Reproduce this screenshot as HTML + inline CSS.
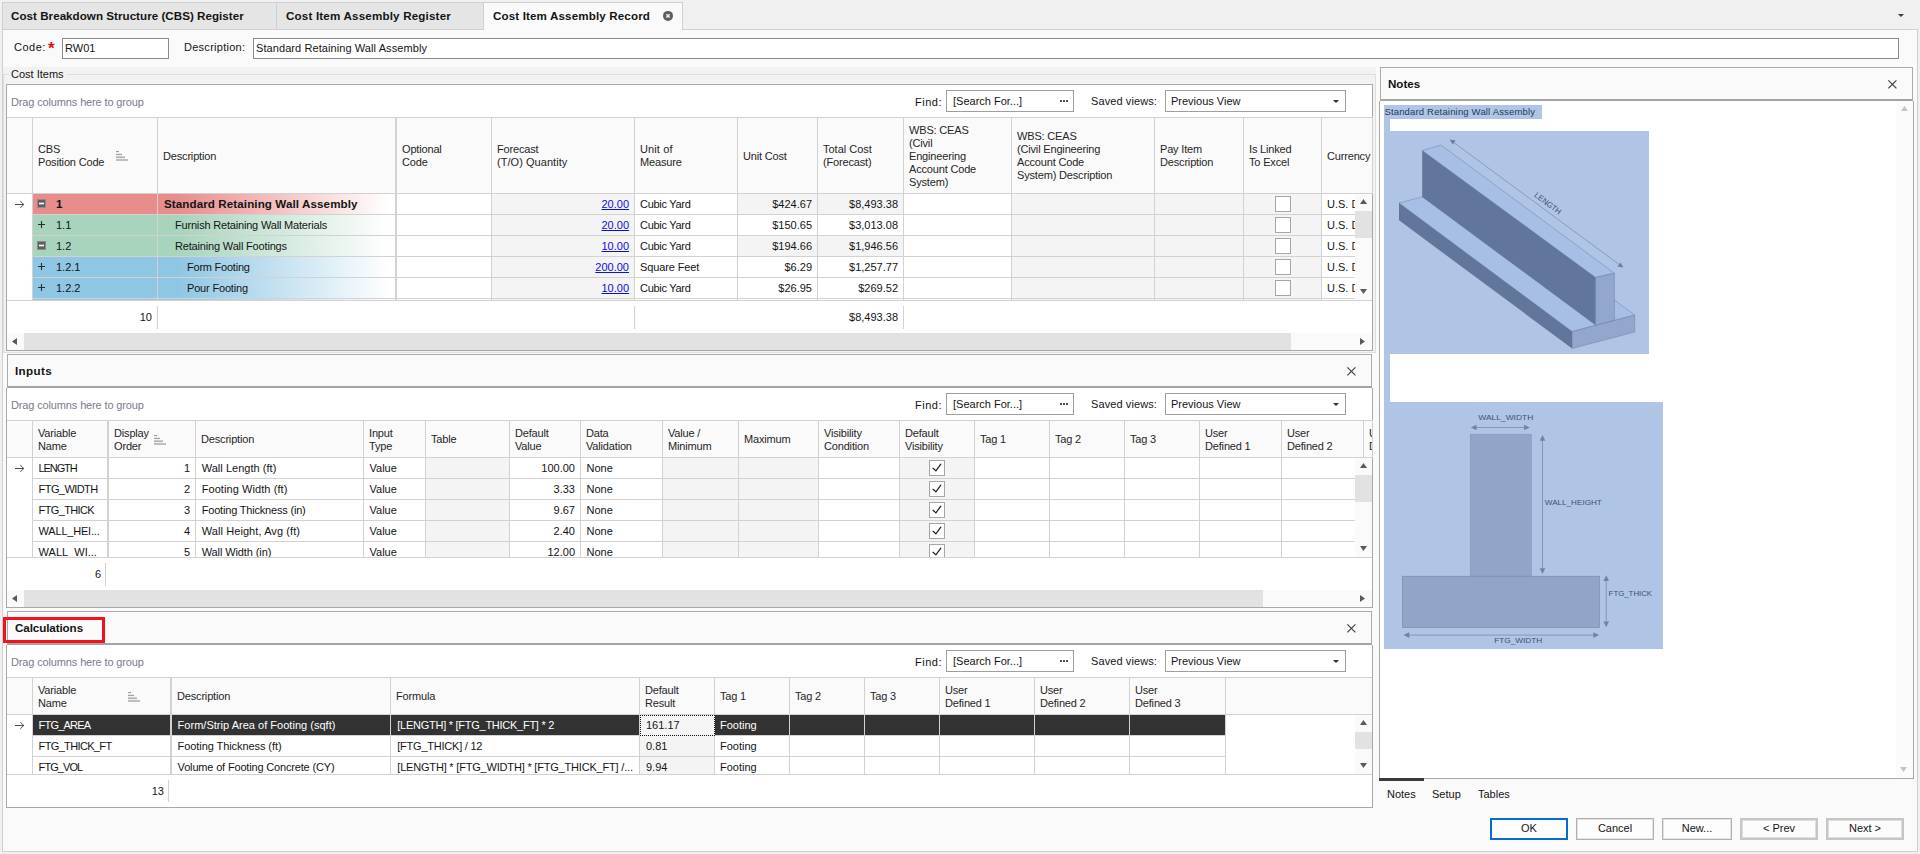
<!DOCTYPE html><html><head><meta charset="utf-8"><title>Cost Item Assembly Record</title><style>
html,body{margin:0;padding:0;}
body{width:1920px;height:854px;background:#f0f0f0;position:relative;overflow:hidden;font-family:"Liberation Sans", sans-serif;font-size:11px;color:#141414;}
div{position:absolute;box-sizing:border-box;}
.t{white-space:nowrap;line-height:13px;height:13px;}
.b{white-space:nowrap;line-height:13px;height:13px;font-weight:bold;font-size:11.6px;letter-spacing:0.15px;}
.h{white-space:nowrap;line-height:13px;color:#262626;letter-spacing:-0.17px;}
.lnk{color:#0c0ce6;text-decoration:underline;}
.vl{width:1px;background:#d2d2d2;}
.hl{height:1px;background:#d2d2d2;}
.cb{width:15px;height:15px;background:#fff;border:1px solid #ababab;}
svg{position:absolute;overflow:visible;}
</style></head><body>
<div style="left:2px;top:29px;width:1916px;height:823px;background:#fafafa;border:1px solid #d0d0d0;"></div>
<div style="left:2px;top:2px;width:275px;height:28px;background:#e5e5e5;border:1px solid #d0d0d0;"></div>
<div style="left:276px;top:2px;width:208px;height:28px;background:#e5e5e5;border:1px solid #d0d0d0;"></div>
<div style="left:483px;top:2px;width:200px;height:28px;background:#fafafa;border:1px solid #d0d0d0;border-bottom:none;"></div>
<div class="b" style="left:11px;top:9px;letter-spacing:0.039px;">Cost Breakdown Structure (CBS) Register</div>
<div class="b" style="left:286px;top:9px;letter-spacing:0.185px;">Cost Item Assembly Register</div>
<div class="b" style="left:493px;top:9px;letter-spacing:0.138px;">Cost Item Assembly Record</div>
<svg style="left:662px;top:10px" width="12" height="12" viewBox="0 0 12 12"><circle cx="6" cy="5.9" r="5" fill="#5e5e5e"/><path d="M4.3 4.2L7.7 7.6M7.7 4.2L4.3 7.6" stroke="#f2f2f2" stroke-width="1.35"/></svg>
<svg style="left:1897.5px;top:13.8px" width="6" height="3" viewBox="0 0 6 3"><path d="M0 0H6L3 3Z" fill="#3a3a3a"/></svg>
<div class="t" style="left:14px;top:41px;letter-spacing:0.5px;">Code:</div>
<div class="t" style="left:48px;top:40px;color:#e01010;font-size:17px;font-weight:bold;line-height:17px;height:17px;">*</div>
<div style="left:62px;top:38px;width:107px;height:21px;background:#fff;border:1px solid #8a8a8a;"></div>
<div class="t" style="left:65px;top:42px;">RW01</div>
<div class="t" style="left:184px;top:41px;letter-spacing:0.268px;">Description:</div>
<div style="left:253px;top:38px;width:1646px;height:21px;background:#fff;border:1px solid #8a8a8a;"></div>
<div class="t" style="left:256px;top:42px;letter-spacing:0.083px;">Standard Retaining Wall Assembly</div>
<div style="left:3px;top:67px;width:1373px;height:286px;background:#f2f2f2;"></div>
<div style="left:3px;top:74px;width:1373px;height:279px;border:1px solid #dedede;"></div>
<div style="left:9px;top:68px;width:58px;height:13px;background:#f2f2f2;"></div>
<div class="t" style="left:11px;top:68px;">Cost Items</div>
<div style="left:6px;top:84px;width:1367px;height:267px;background:#fff;border:1px solid #a8a8a8;"></div>
<div class="t" style="left:11px;top:96px;letter-spacing:-0.137px;color:#7a7a8c;">Drag columns here to group</div>
<div class="t" style="left:915px;top:96px;letter-spacing:0.5px;">Find:</div>
<div style="left:946px;top:90px;width:128px;height:22px;background:#fff;border:1px solid #9e9e9e;"></div>
<div class="t" style="left:953px;top:95px;">[Search For...]</div>
<svg style="left:1060px;top:100px" width="9" height="2" viewBox="0 0 9 2"><rect x="0" y="0" width="2" height="2" fill="#505050"/><rect x="3" y="0" width="2" height="2" fill="#505050"/><rect x="6" y="0" width="2" height="2" fill="#505050"/></svg>
<div class="t" style="left:1091px;top:95px;letter-spacing:0.099px;">Saved views:</div>
<div style="left:1165px;top:90px;width:181px;height:22px;background:#fff;border:1px solid #9e9e9e;"></div>
<div class="t" style="left:1171px;top:95px;">Previous View</div>
<svg style="left:1333px;top:100px" width="6" height="3" viewBox="0 0 6 3"><path d="M0 0H6L3 3Z" fill="#2e2e2e"/></svg>
<div style="left:7px;top:117px;width:1365px;height:77px;background:#fafafa;border-top:1px solid #d2d2d2;border-bottom:1px solid #d2d2d2;"></div>
<div style="left:32px;top:117px;width:1px;height:77px;background:#d2d2d2;"></div>
<div style="left:157px;top:117px;width:1px;height:77px;background:#d2d2d2;"></div>
<div style="left:395px;top:117px;width:2px;height:77px;background:#d2d2d2;"></div>
<div style="left:491px;top:117px;width:1px;height:77px;background:#d2d2d2;"></div>
<div style="left:634px;top:117px;width:1px;height:77px;background:#d2d2d2;"></div>
<div style="left:737px;top:117px;width:1px;height:77px;background:#d2d2d2;"></div>
<div style="left:817px;top:117px;width:1px;height:77px;background:#d2d2d2;"></div>
<div style="left:903px;top:117px;width:1px;height:77px;background:#d2d2d2;"></div>
<div style="left:1011px;top:117px;width:1px;height:77px;background:#d2d2d2;"></div>
<div style="left:1154px;top:117px;width:1px;height:77px;background:#d2d2d2;"></div>
<div style="left:1243px;top:117px;width:1px;height:77px;background:#d2d2d2;"></div>
<div style="left:1321px;top:117px;width:1px;height:77px;background:#d2d2d2;"></div>
<div style="left:1372px;top:117px;width:1px;height:77px;background:#d2d2d2;"></div>
<div class="h" style="left:38px;top:143px;">CBS</div>
<div class="h" style="left:38px;top:156px;">Position Code</div>
<div class="h" style="left:163px;top:150px;">Description</div>
<div class="h" style="left:402px;top:143px;">Optional</div>
<div class="h" style="left:402px;top:156px;">Code</div>
<div class="h" style="left:497px;top:143px;">Forecast</div>
<div class="h" style="left:497px;top:156px;letter-spacing:0.044px;">(T/O) Quantity</div>
<div class="h" style="left:640px;top:143px;letter-spacing:0.115px;">Unit of</div>
<div class="h" style="left:640px;top:156px;">Measure</div>
<div class="h" style="left:743px;top:150px;">Unit Cost</div>
<div class="h" style="left:823px;top:143px;letter-spacing:-0.002px;">Total Cost</div>
<div class="h" style="left:823px;top:156px;">(Forecast)</div>
<div class="h" style="left:909px;top:124px;">WBS: CEAS</div>
<div class="h" style="left:909px;top:137px;">(Civil</div>
<div class="h" style="left:909px;top:150px;">Engineering</div>
<div class="h" style="left:909px;top:163px;">Account Code</div>
<div class="h" style="left:909px;top:176px;">System)</div>
<div class="h" style="left:1017px;top:130px;">WBS: CEAS</div>
<div class="h" style="left:1017px;top:143px;">(Civil Engineering</div>
<div class="h" style="left:1017px;top:156px;">Account Code</div>
<div class="h" style="left:1017px;top:169px;">System) Description</div>
<div class="h" style="left:1160px;top:143px;">Pay Item</div>
<div class="h" style="left:1160px;top:156px;">Description</div>
<div class="h" style="left:1249px;top:143px;">Is Linked</div>
<div class="h" style="left:1249px;top:156px;">To Excel</div>
<div class="h" style="left:1327px;top:150px;">Currency</div>
<svg style="left:116.2px;top:150.9px" width="13" height="11" viewBox="0 0 13 11"><rect x="0" y="0" width="3" height="1.1" fill="#9a9a9a"/><rect x="0" y="2.8" width="6" height="1.3" fill="#a2a2a2"/><rect x="0" y="5.4" width="9" height="1.7" fill="#b0b0b0"/><rect x="0" y="8" width="12" height="2" fill="#bebebe"/></svg>
<div style="left:7px;top:194px;width:1365px;height:106px;overflow:hidden;">
<div style="left:26px;top:0px;width:124px;height:20px;background:#e88c8c;"></div>
<div style="left:151px;top:0px;width:238px;height:20px;background:linear-gradient(to right,#e88c8c 0%,#e88c8c 8%,#ffffff 97%);"></div>
<div style="left:485px;top:0px;width:142px;height:20px;background:#f4f4f4;"></div>
<div style="left:731px;top:0px;width:79px;height:20px;background:#f4f4f4;"></div>
<div style="left:811px;top:0px;width:85px;height:20px;background:#f4f4f4;"></div>
<div style="left:1005px;top:0px;width:142px;height:20px;background:#f4f4f4;"></div>
<div style="left:1148px;top:0px;width:88px;height:20px;background:#f4f4f4;"></div>
<div style="left:1237px;top:0px;width:77px;height:20px;background:#f4f4f4;"></div>
<div style="left:25px;top:20px;width:1340px;height:1px;background:#d2d2d2;"></div>
<div style="left:26px;top:21px;width:124px;height:20px;background:#a8d3bc;"></div>
<div style="left:151px;top:21px;width:238px;height:20px;background:linear-gradient(to right,#a8d3bc 0%,#a8d3bc 8%,#ffffff 97%);"></div>
<div style="left:485px;top:21px;width:142px;height:20px;background:#f4f4f4;"></div>
<div style="left:1005px;top:21px;width:142px;height:20px;background:#f4f4f4;"></div>
<div style="left:1148px;top:21px;width:88px;height:20px;background:#f4f4f4;"></div>
<div style="left:1237px;top:21px;width:77px;height:20px;background:#f4f4f4;"></div>
<div style="left:25px;top:41px;width:1340px;height:1px;background:#d2d2d2;"></div>
<div style="left:26px;top:42px;width:124px;height:20px;background:#a8d3bc;"></div>
<div style="left:151px;top:42px;width:238px;height:20px;background:linear-gradient(to right,#a8d3bc 0%,#a8d3bc 8%,#ffffff 97%);"></div>
<div style="left:485px;top:42px;width:142px;height:20px;background:#f4f4f4;"></div>
<div style="left:731px;top:42px;width:79px;height:20px;background:#f4f4f4;"></div>
<div style="left:811px;top:42px;width:85px;height:20px;background:#f4f4f4;"></div>
<div style="left:1005px;top:42px;width:142px;height:20px;background:#f4f4f4;"></div>
<div style="left:1148px;top:42px;width:88px;height:20px;background:#f4f4f4;"></div>
<div style="left:1237px;top:42px;width:77px;height:20px;background:#f4f4f4;"></div>
<div style="left:25px;top:62px;width:1340px;height:1px;background:#d2d2d2;"></div>
<div style="left:26px;top:63px;width:124px;height:20px;background:#8fc6e4;"></div>
<div style="left:151px;top:63px;width:238px;height:20px;background:linear-gradient(to right,#8fc6e4 0%,#8fc6e4 8%,#ffffff 97%);"></div>
<div style="left:485px;top:63px;width:142px;height:20px;background:#f4f4f4;"></div>
<div style="left:1005px;top:63px;width:142px;height:20px;background:#f4f4f4;"></div>
<div style="left:1148px;top:63px;width:88px;height:20px;background:#f4f4f4;"></div>
<div style="left:1237px;top:63px;width:77px;height:20px;background:#f4f4f4;"></div>
<div style="left:25px;top:83px;width:1340px;height:1px;background:#d2d2d2;"></div>
<div style="left:26px;top:84px;width:124px;height:20px;background:#8fc6e4;"></div>
<div style="left:151px;top:84px;width:238px;height:20px;background:linear-gradient(to right,#8fc6e4 0%,#8fc6e4 8%,#ffffff 97%);"></div>
<div style="left:485px;top:84px;width:142px;height:20px;background:#f4f4f4;"></div>
<div style="left:1005px;top:84px;width:142px;height:20px;background:#f4f4f4;"></div>
<div style="left:1148px;top:84px;width:88px;height:20px;background:#f4f4f4;"></div>
<div style="left:1237px;top:84px;width:77px;height:20px;background:#f4f4f4;"></div>
<div style="left:25px;top:104px;width:1340px;height:1px;background:#d2d2d2;"></div>
<div style="left:26px;top:105px;width:124px;height:20px;background:#8fc6e4;"></div>
<div style="left:151px;top:105px;width:238px;height:20px;background:linear-gradient(to right,#8fc6e4 0%,#8fc6e4 8%,#ffffff 97%);"></div>
<div style="left:485px;top:105px;width:142px;height:20px;background:#f4f4f4;"></div>
<div style="left:1005px;top:105px;width:142px;height:20px;background:#f4f4f4;"></div>
<div style="left:1148px;top:105px;width:88px;height:20px;background:#f4f4f4;"></div>
<div style="left:1237px;top:105px;width:77px;height:20px;background:#f4f4f4;"></div>
<div style="left:25px;top:125px;width:1340px;height:1px;background:#d2d2d2;"></div>
<div style="left:25px;top:0px;width:1px;height:106px;background:#d2d2d2;"></div>
<div style="left:150px;top:0px;width:1px;height:106px;background:#d2d2d2;"></div>
<div style="left:388px;top:0px;width:2px;height:106px;background:#d2d2d2;"></div>
<div style="left:484px;top:0px;width:1px;height:106px;background:#d2d2d2;"></div>
<div style="left:627px;top:0px;width:1px;height:106px;background:#d2d2d2;"></div>
<div style="left:730px;top:0px;width:1px;height:106px;background:#d2d2d2;"></div>
<div style="left:810px;top:0px;width:1px;height:106px;background:#d2d2d2;"></div>
<div style="left:896px;top:0px;width:1px;height:106px;background:#d2d2d2;"></div>
<div style="left:1004px;top:0px;width:1px;height:106px;background:#d2d2d2;"></div>
<div style="left:1147px;top:0px;width:1px;height:106px;background:#d2d2d2;"></div>
<div style="left:1236px;top:0px;width:1px;height:106px;background:#d2d2d2;"></div>
<div style="left:1314px;top:0px;width:1px;height:106px;background:#d2d2d2;"></div>
</div>
<svg style="left:14px;top:200px" width="11" height="9" viewBox="0 0 11 9"><path d="M1 4.5H9.8M6.3 1.2L9.8 4.5L6.3 7.8" stroke="#444" stroke-width="0.95" fill="none"/></svg>
<svg style="left:37px;top:199px" width="9" height="9" viewBox="0 0 9 9"><rect width="9" height="9" fill="#8c8c8c"/><rect x="1" y="1" width="7" height="7" fill="#606060"/><rect x="2" y="3.7" width="5" height="1.6" fill="#fff"/></svg>
<div class="t" style="left:56px;top:197px;font-weight:bold;font-size:11.6px;letter-spacing:0.15px;">1</div>
<div class="t" style="left:164px;top:197px;letter-spacing:0.097px;font-weight:bold;font-size:11.6px;">Standard Retaining Wall Assembly</div>
<div class="t lnk" style="right:1291px;top:198px;">20.00</div>
<div class="t" style="left:640px;top:198px;letter-spacing:-0.281px;">Cubic Yard</div>
<div class="t" style="right:1108px;top:198px;">$424.67</div>
<div class="t" style="right:1022px;top:198px;">$8,493.38</div>
<div style="left:1275px;top:196px;width:16px;height:16px;background:#fff;border:1px solid #a6a6a6;"></div>
<div class="t" style="left:1327px;top:198px;">U.S. D</div>
<svg style="left:37px;top:220px" width="9" height="9" viewBox="0 0 9 9"><path d="M4.5 1V8M1 4.5H8" stroke="#2c2c2c" stroke-width="1.1"/></svg>
<div class="t" style="left:56px;top:219px;">1.1</div>
<div class="t" style="left:175px;top:219px;letter-spacing:-0.186px;">Furnish Retaining Wall Materials</div>
<div class="t lnk" style="right:1291px;top:219px;">20.00</div>
<div class="t" style="left:640px;top:219px;letter-spacing:-0.281px;">Cubic Yard</div>
<div class="t" style="right:1108px;top:219px;">$150.65</div>
<div class="t" style="right:1022px;top:219px;">$3,013.08</div>
<div style="left:1275px;top:217px;width:16px;height:16px;background:#fff;border:1px solid #a6a6a6;"></div>
<div class="t" style="left:1327px;top:219px;">U.S. D</div>
<svg style="left:37px;top:241px" width="9" height="9" viewBox="0 0 9 9"><rect width="9" height="9" fill="#8c8c8c"/><rect x="1" y="1" width="7" height="7" fill="#606060"/><rect x="2" y="3.7" width="5" height="1.6" fill="#fff"/></svg>
<div class="t" style="left:56px;top:240px;">1.2</div>
<div class="t" style="left:175px;top:240px;letter-spacing:-0.168px;">Retaining Wall Footings</div>
<div class="t lnk" style="right:1291px;top:240px;">10.00</div>
<div class="t" style="left:640px;top:240px;letter-spacing:-0.281px;">Cubic Yard</div>
<div class="t" style="right:1108px;top:240px;">$194.66</div>
<div class="t" style="right:1022px;top:240px;">$1,946.56</div>
<div style="left:1275px;top:238px;width:16px;height:16px;background:#fff;border:1px solid #a6a6a6;"></div>
<div class="t" style="left:1327px;top:240px;">U.S. D</div>
<svg style="left:37px;top:262px" width="9" height="9" viewBox="0 0 9 9"><path d="M4.5 1V8M1 4.5H8" stroke="#2c2c2c" stroke-width="1.1"/></svg>
<div class="t" style="left:56px;top:261px;">1.2.1</div>
<div class="t" style="left:187px;top:261px;letter-spacing:-0.227px;">Form Footing</div>
<div class="t lnk" style="right:1291px;top:261px;">200.00</div>
<div class="t" style="left:640px;top:261px;letter-spacing:-0.113px;">Square Feet</div>
<div class="t" style="right:1108px;top:261px;">$6.29</div>
<div class="t" style="right:1022px;top:261px;">$1,257.77</div>
<div style="left:1275px;top:259px;width:16px;height:16px;background:#fff;border:1px solid #a6a6a6;"></div>
<div class="t" style="left:1327px;top:261px;">U.S. D</div>
<svg style="left:37px;top:283px" width="9" height="9" viewBox="0 0 9 9"><path d="M4.5 1V8M1 4.5H8" stroke="#2c2c2c" stroke-width="1.1"/></svg>
<div class="t" style="left:56px;top:282px;">1.2.2</div>
<div class="t" style="left:187px;top:282px;letter-spacing:-0.174px;">Pour Footing</div>
<div class="t lnk" style="right:1291px;top:282px;">10.00</div>
<div class="t" style="left:640px;top:282px;letter-spacing:-0.281px;">Cubic Yard</div>
<div class="t" style="right:1108px;top:282px;">$26.95</div>
<div class="t" style="right:1022px;top:282px;">$269.52</div>
<div style="left:1275px;top:280px;width:16px;height:16px;background:#fff;border:1px solid #a6a6a6;"></div>
<div class="t" style="left:1327px;top:282px;">U.S. D</div>
<div style="left:1355px;top:194px;width:17px;height:106px;background:#fafafa;"></div>
<div style="left:1355px;top:211px;width:17px;height:27px;background:#e2e2e2;"></div>
<svg style="left:1360px;top:199px" width="7" height="5" viewBox="0 0 7 5"><path d="M0 5H7L3.5 0Z" fill="#5a5a5a"/></svg>
<svg style="left:1360px;top:289px" width="7" height="5" viewBox="0 0 7 5"><path d="M0 0H7L3.5 5Z" fill="#5a5a5a"/></svg>
<div style="left:7px;top:300px;width:1365px;height:1px;background:#d2d2d2;"></div>
<div class="t" style="right:1768px;top:311px;">10</div>
<div style="left:157px;top:306px;width:1px;height:23px;background:#d2d2d2;"></div>
<div style="left:634px;top:306px;width:1px;height:23px;background:#d2d2d2;"></div>
<div style="left:903px;top:306px;width:1px;height:23px;background:#d2d2d2;"></div>
<div class="t" style="right:1022px;top:311px;">$8,493.38</div>
<div style="left:7px;top:333px;width:1365px;height:17px;background:#fafafa;"></div>
<div style="left:24px;top:333px;width:1267px;height:17px;background:#e2e2e2;"></div>
<svg style="left:12px;top:338px" width="5" height="7" viewBox="0 0 5 7"><path d="M5 0V7L0 3.5Z" fill="#5a5a5a"/></svg>
<svg style="left:1360px;top:338px" width="5" height="7" viewBox="0 0 5 7"><path d="M0 0V7L5 3.5Z" fill="#5a5a5a"/></svg>
<div style="left:7px;top:354px;width:1365px;height:34px;background:#fafafa;border:1px solid #ababab;border-bottom:2px solid #a3a3a3;"></div>
<div class="b" style="left:15px;top:364px;letter-spacing:0.370px;">Inputs</div>
<svg style="left:1346.6px;top:366.6px" width="9" height="9" viewBox="0 0 9 9"><path d="M0.4 0.4L8.4 8.4M8.4 0.4L0.4 8.4" stroke="#444" stroke-width="1.25"/></svg>
<div style="left:6px;top:388px;width:1367px;height:220px;background:#fff;border:1px solid #a8a8a8;border-top:none;"></div>
<div class="t" style="left:11px;top:399px;letter-spacing:-0.137px;color:#7a7a8c;">Drag columns here to group</div>
<div class="t" style="left:915px;top:399px;letter-spacing:0.5px;">Find:</div>
<div style="left:946px;top:393px;width:128px;height:22px;background:#fff;border:1px solid #9e9e9e;"></div>
<div class="t" style="left:953px;top:398px;">[Search For...]</div>
<svg style="left:1060px;top:403px" width="9" height="2" viewBox="0 0 9 2"><rect x="0" y="0" width="2" height="2" fill="#505050"/><rect x="3" y="0" width="2" height="2" fill="#505050"/><rect x="6" y="0" width="2" height="2" fill="#505050"/></svg>
<div class="t" style="left:1091px;top:398px;letter-spacing:0.099px;">Saved views:</div>
<div style="left:1165px;top:393px;width:181px;height:22px;background:#fff;border:1px solid #9e9e9e;"></div>
<div class="t" style="left:1171px;top:398px;">Previous View</div>
<svg style="left:1333px;top:403px" width="6" height="3" viewBox="0 0 6 3"><path d="M0 0H6L3 3Z" fill="#2e2e2e"/></svg>
<div style="left:7px;top:420px;width:1365px;height:38px;background:#fafafa;border-top:1px solid #d2d2d2;border-bottom:1px solid #d2d2d2;"></div>
<div style="left:32px;top:420px;width:1px;height:38px;background:#d2d2d2;"></div>
<div style="left:107px;top:420px;width:2px;height:38px;background:#d2d2d2;"></div>
<div style="left:195px;top:420px;width:1px;height:38px;background:#d2d2d2;"></div>
<div style="left:363px;top:420px;width:1px;height:38px;background:#d2d2d2;"></div>
<div style="left:425px;top:420px;width:1px;height:38px;background:#d2d2d2;"></div>
<div style="left:509px;top:420px;width:1px;height:38px;background:#d2d2d2;"></div>
<div style="left:580px;top:420px;width:1px;height:38px;background:#d2d2d2;"></div>
<div style="left:662px;top:420px;width:1px;height:38px;background:#d2d2d2;"></div>
<div style="left:738px;top:420px;width:1px;height:38px;background:#d2d2d2;"></div>
<div style="left:818px;top:420px;width:1px;height:38px;background:#d2d2d2;"></div>
<div style="left:899px;top:420px;width:1px;height:38px;background:#d2d2d2;"></div>
<div style="left:974px;top:420px;width:1px;height:38px;background:#d2d2d2;"></div>
<div style="left:1049px;top:420px;width:1px;height:38px;background:#d2d2d2;"></div>
<div style="left:1124px;top:420px;width:1px;height:38px;background:#d2d2d2;"></div>
<div style="left:1199px;top:420px;width:1px;height:38px;background:#d2d2d2;"></div>
<div style="left:1281px;top:420px;width:1px;height:38px;background:#d2d2d2;"></div>
<div style="left:1363px;top:420px;width:1px;height:38px;background:#d2d2d2;"></div>
<div style="left:1372px;top:420px;width:1px;height:38px;background:#d2d2d2;"></div>
<div class="h" style="left:38px;top:427px;">Variable</div>
<div class="h" style="left:38px;top:440px;">Name</div>
<div class="h" style="left:114px;top:427px;">Display</div>
<div class="h" style="left:114px;top:440px;">Order</div>
<div class="h" style="left:201px;top:433px;">Description</div>
<div class="h" style="left:369px;top:427px;">Input</div>
<div class="h" style="left:369px;top:440px;">Type</div>
<div class="h" style="left:431px;top:433px;">Table</div>
<div class="h" style="left:515px;top:427px;">Default</div>
<div class="h" style="left:515px;top:440px;">Value</div>
<div class="h" style="left:586px;top:427px;">Data</div>
<div class="h" style="left:586px;top:440px;">Validation</div>
<div class="h" style="left:668px;top:427px;">Value /</div>
<div class="h" style="left:668px;top:440px;">Minimum</div>
<div class="h" style="left:744px;top:433px;">Maximum</div>
<div class="h" style="left:824px;top:427px;">Visibility</div>
<div class="h" style="left:824px;top:440px;">Condition</div>
<div class="h" style="left:905px;top:427px;">Default</div>
<div class="h" style="left:905px;top:440px;">Visibility</div>
<div class="h" style="left:980px;top:433px;">Tag 1</div>
<div class="h" style="left:1055px;top:433px;">Tag 2</div>
<div class="h" style="left:1130px;top:433px;">Tag 3</div>
<div class="h" style="left:1205px;top:427px;">User</div>
<div class="h" style="left:1205px;top:440px;">Defined 1</div>
<div class="h" style="left:1287px;top:427px;">User</div>
<div class="h" style="left:1287px;top:440px;">Defined 2</div>
<div style="left:1364px;top:422px;width:8px;height:35px;overflow:hidden;"><div class="h" style="left:5px;top:5px;">User</div><div class="h" style="left:5px;top:18px;">Defined 3</div></div>
<svg style="left:154px;top:434.7px" width="13" height="11" viewBox="0 0 13 11"><rect x="0" y="0" width="3" height="1.1" fill="#9a9a9a"/><rect x="0" y="2.8" width="6" height="1.3" fill="#a2a2a2"/><rect x="0" y="5.4" width="9" height="1.7" fill="#b0b0b0"/><rect x="0" y="8" width="12" height="2" fill="#bebebe"/></svg>
<div style="left:7px;top:458px;width:1365px;height:99px;overflow:hidden;">
<div style="left:419px;top:0px;width:83px;height:20px;background:#f4f4f4;"></div>
<div style="left:656px;top:0px;width:75px;height:20px;background:#f4f4f4;"></div>
<div style="left:732px;top:0px;width:79px;height:20px;background:#f4f4f4;"></div>
<div style="left:893px;top:0px;width:74px;height:20px;background:#f4f4f4;"></div>
<div style="left:25px;top:20px;width:1340px;height:1px;background:#d2d2d2;"></div>
<div style="left:419px;top:21px;width:83px;height:20px;background:#f4f4f4;"></div>
<div style="left:656px;top:21px;width:75px;height:20px;background:#f4f4f4;"></div>
<div style="left:732px;top:21px;width:79px;height:20px;background:#f4f4f4;"></div>
<div style="left:893px;top:21px;width:74px;height:20px;background:#f4f4f4;"></div>
<div style="left:25px;top:41px;width:1340px;height:1px;background:#d2d2d2;"></div>
<div style="left:419px;top:42px;width:83px;height:20px;background:#f4f4f4;"></div>
<div style="left:656px;top:42px;width:75px;height:20px;background:#f4f4f4;"></div>
<div style="left:732px;top:42px;width:79px;height:20px;background:#f4f4f4;"></div>
<div style="left:893px;top:42px;width:74px;height:20px;background:#f4f4f4;"></div>
<div style="left:25px;top:62px;width:1340px;height:1px;background:#d2d2d2;"></div>
<div style="left:419px;top:63px;width:83px;height:20px;background:#f4f4f4;"></div>
<div style="left:656px;top:63px;width:75px;height:20px;background:#f4f4f4;"></div>
<div style="left:732px;top:63px;width:79px;height:20px;background:#f4f4f4;"></div>
<div style="left:893px;top:63px;width:74px;height:20px;background:#f4f4f4;"></div>
<div style="left:25px;top:83px;width:1340px;height:1px;background:#d2d2d2;"></div>
<div style="left:419px;top:84px;width:83px;height:20px;background:#f4f4f4;"></div>
<div style="left:656px;top:84px;width:75px;height:20px;background:#f4f4f4;"></div>
<div style="left:732px;top:84px;width:79px;height:20px;background:#f4f4f4;"></div>
<div style="left:893px;top:84px;width:74px;height:20px;background:#f4f4f4;"></div>
<div style="left:25px;top:104px;width:1340px;height:1px;background:#d2d2d2;"></div>
<div style="left:25px;top:0px;width:1px;height:99px;background:#d2d2d2;"></div>
<div style="left:100px;top:0px;width:2px;height:99px;background:#d2d2d2;"></div>
<div style="left:188px;top:0px;width:1px;height:99px;background:#d2d2d2;"></div>
<div style="left:356px;top:0px;width:1px;height:99px;background:#d2d2d2;"></div>
<div style="left:418px;top:0px;width:1px;height:99px;background:#d2d2d2;"></div>
<div style="left:502px;top:0px;width:1px;height:99px;background:#d2d2d2;"></div>
<div style="left:573px;top:0px;width:1px;height:99px;background:#d2d2d2;"></div>
<div style="left:655px;top:0px;width:1px;height:99px;background:#d2d2d2;"></div>
<div style="left:731px;top:0px;width:1px;height:99px;background:#d2d2d2;"></div>
<div style="left:811px;top:0px;width:1px;height:99px;background:#d2d2d2;"></div>
<div style="left:892px;top:0px;width:1px;height:99px;background:#d2d2d2;"></div>
<div style="left:967px;top:0px;width:1px;height:99px;background:#d2d2d2;"></div>
<div style="left:1042px;top:0px;width:1px;height:99px;background:#d2d2d2;"></div>
<div style="left:1117px;top:0px;width:1px;height:99px;background:#d2d2d2;"></div>
<div style="left:1192px;top:0px;width:1px;height:99px;background:#d2d2d2;"></div>
<div style="left:1274px;top:0px;width:1px;height:99px;background:#d2d2d2;"></div>
<div style="left:1356px;top:0px;width:1px;height:99px;background:#d2d2d2;"></div>
<div class="t" style="left:31.6px;top:4px;letter-spacing:-1.121px;">LENGTH</div>
<div class="t" style="right:1182px;top:4px;">1</div>
<div class="t" style="left:194.7px;top:4px;letter-spacing:0.032px;">Wall Length (ft)</div>
<div class="t" style="left:362.5px;top:4px;">Value</div>
<div class="t" style="right:797px;top:4px;">100.00</div>
<div class="t" style="left:579.5px;top:4px;">None</div>
<div style="left:922px;top:2px;width:16px;height:16px;background:#fff;border:1px solid #a6a6a6;"></div>
<svg style="left:922px;top:2px" width="16" height="16" viewBox="0 0 16 16"><path d="M4.1 8.3L6.9 10.9L11.8 4.2" stroke="#222" stroke-width="1.25" fill="none" stroke-linecap="round"/></svg>
<div class="t" style="left:31.6px;top:25px;letter-spacing:-0.575px;">FTG_WIDTH</div>
<div class="t" style="right:1182px;top:25px;">2</div>
<div class="t" style="left:194.7px;top:25px;letter-spacing:0.074px;">Footing Width (ft)</div>
<div class="t" style="left:362.5px;top:25px;">Value</div>
<div class="t" style="right:797px;top:25px;">3.33</div>
<div class="t" style="left:579.5px;top:25px;">None</div>
<div style="left:922px;top:23px;width:16px;height:16px;background:#fff;border:1px solid #a6a6a6;"></div>
<svg style="left:922px;top:23px" width="16" height="16" viewBox="0 0 16 16"><path d="M4.1 8.3L6.9 10.9L11.8 4.2" stroke="#222" stroke-width="1.25" fill="none" stroke-linecap="round"/></svg>
<div class="t" style="left:31.6px;top:46px;letter-spacing:-0.636px;">FTG_THICK</div>
<div class="t" style="right:1182px;top:46px;">3</div>
<div class="t" style="left:194.7px;top:46px;letter-spacing:-0.187px;">Footing Thickness (in)</div>
<div class="t" style="left:362.5px;top:46px;">Value</div>
<div class="t" style="right:797px;top:46px;">9.67</div>
<div class="t" style="left:579.5px;top:46px;">None</div>
<div style="left:922px;top:44px;width:16px;height:16px;background:#fff;border:1px solid #a6a6a6;"></div>
<svg style="left:922px;top:44px" width="16" height="16" viewBox="0 0 16 16"><path d="M4.1 8.3L6.9 10.9L11.8 4.2" stroke="#222" stroke-width="1.25" fill="none" stroke-linecap="round"/></svg>
<div class="t" style="left:31.6px;top:67px;letter-spacing:-0.207px;">WALL_HEI...</div>
<div class="t" style="right:1182px;top:67px;">4</div>
<div class="t" style="left:194.7px;top:67px;letter-spacing:0.086px;">Wall Height, Avg (ft)</div>
<div class="t" style="left:362.5px;top:67px;">Value</div>
<div class="t" style="right:797px;top:67px;">2.40</div>
<div class="t" style="left:579.5px;top:67px;">None</div>
<div style="left:922px;top:65px;width:16px;height:16px;background:#fff;border:1px solid #a6a6a6;"></div>
<svg style="left:922px;top:65px" width="16" height="16" viewBox="0 0 16 16"><path d="M4.1 8.3L6.9 10.9L11.8 4.2" stroke="#222" stroke-width="1.25" fill="none" stroke-linecap="round"/></svg>
<div class="t" style="left:31.6px;top:88px;letter-spacing:0.002px;">WALL_WI...</div>
<div class="t" style="right:1182px;top:88px;">5</div>
<div class="t" style="left:194.7px;top:88px;letter-spacing:-0.101px;">Wall Width (in)</div>
<div class="t" style="left:362.5px;top:88px;">Value</div>
<div class="t" style="right:797px;top:88px;">12.00</div>
<div class="t" style="left:579.5px;top:88px;">None</div>
<div style="left:922px;top:86px;width:16px;height:16px;background:#fff;border:1px solid #a6a6a6;"></div>
<svg style="left:922px;top:86px" width="16" height="16" viewBox="0 0 16 16"><path d="M4.1 8.3L6.9 10.9L11.8 4.2" stroke="#222" stroke-width="1.25" fill="none" stroke-linecap="round"/></svg>
</div>
<svg style="left:14px;top:464px" width="11" height="9" viewBox="0 0 11 9"><path d="M1 4.5H9.8M6.3 1.2L9.8 4.5L6.3 7.8" stroke="#444" stroke-width="0.95" fill="none"/></svg>
<div style="left:1355px;top:458px;width:17px;height:99px;background:#fafafa;"></div>
<div style="left:1355px;top:475px;width:17px;height:27px;background:#e2e2e2;"></div>
<svg style="left:1360px;top:463px" width="7" height="5" viewBox="0 0 7 5"><path d="M0 5H7L3.5 0Z" fill="#5a5a5a"/></svg>
<svg style="left:1360px;top:546px" width="7" height="5" viewBox="0 0 7 5"><path d="M0 0H7L3.5 5Z" fill="#5a5a5a"/></svg>
<div style="left:7px;top:557px;width:1365px;height:1px;background:#d2d2d2;"></div>
<div class="t" style="right:1819px;top:568px;">6</div>
<div style="left:105px;top:563px;width:1px;height:23px;background:#d2d2d2;"></div>
<div style="left:7px;top:590px;width:1365px;height:17px;background:#fafafa;"></div>
<div style="left:24px;top:590px;width:1239px;height:17px;background:#e2e2e2;"></div>
<svg style="left:12px;top:595px" width="5" height="7" viewBox="0 0 5 7"><path d="M5 0V7L0 3.5Z" fill="#5a5a5a"/></svg>
<svg style="left:1360px;top:595px" width="5" height="7" viewBox="0 0 5 7"><path d="M0 0V7L5 3.5Z" fill="#5a5a5a"/></svg>
<div style="left:7px;top:611px;width:1365px;height:34px;background:#fafafa;border:1px solid #ababab;border-bottom:2px solid #a3a3a3;"></div>
<div class="b" style="left:15px;top:621px;letter-spacing:-0.078px;">Calculations</div>
<svg style="left:1346.6px;top:623.6px" width="9" height="9" viewBox="0 0 9 9"><path d="M0.4 0.4L8.4 8.4M8.4 0.4L0.4 8.4" stroke="#444" stroke-width="1.25"/></svg>
<div style="left:3px;top:617px;width:102px;height:26px;border:3px solid #f3111a;"></div>
<div style="left:6px;top:645px;width:1367px;height:163px;background:#fff;border:1px solid #a8a8a8;border-top:none;"></div>
<div class="t" style="left:11px;top:656px;letter-spacing:-0.137px;color:#7a7a8c;">Drag columns here to group</div>
<div class="t" style="left:915px;top:656px;letter-spacing:0.5px;">Find:</div>
<div style="left:946px;top:650px;width:128px;height:22px;background:#fff;border:1px solid #9e9e9e;"></div>
<div class="t" style="left:953px;top:655px;">[Search For...]</div>
<svg style="left:1060px;top:660px" width="9" height="2" viewBox="0 0 9 2"><rect x="0" y="0" width="2" height="2" fill="#505050"/><rect x="3" y="0" width="2" height="2" fill="#505050"/><rect x="6" y="0" width="2" height="2" fill="#505050"/></svg>
<div class="t" style="left:1091px;top:655px;letter-spacing:0.099px;">Saved views:</div>
<div style="left:1165px;top:650px;width:181px;height:22px;background:#fff;border:1px solid #9e9e9e;"></div>
<div class="t" style="left:1171px;top:655px;">Previous View</div>
<svg style="left:1333px;top:660px" width="6" height="3" viewBox="0 0 6 3"><path d="M0 0H6L3 3Z" fill="#2e2e2e"/></svg>
<div style="left:7px;top:677px;width:1365px;height:38px;background:#fafafa;border-top:1px solid #d2d2d2;border-bottom:1px solid #d2d2d2;"></div>
<div style="left:32px;top:677px;width:1px;height:38px;background:#d2d2d2;"></div>
<div style="left:170px;top:677px;width:2px;height:38px;background:#d2d2d2;"></div>
<div style="left:390px;top:677px;width:1px;height:38px;background:#d2d2d2;"></div>
<div style="left:639px;top:677px;width:1px;height:38px;background:#d2d2d2;"></div>
<div style="left:714px;top:677px;width:1px;height:38px;background:#d2d2d2;"></div>
<div style="left:789px;top:677px;width:1px;height:38px;background:#d2d2d2;"></div>
<div style="left:864px;top:677px;width:1px;height:38px;background:#d2d2d2;"></div>
<div style="left:939px;top:677px;width:1px;height:38px;background:#d2d2d2;"></div>
<div style="left:1034px;top:677px;width:1px;height:38px;background:#d2d2d2;"></div>
<div style="left:1129px;top:677px;width:1px;height:38px;background:#d2d2d2;"></div>
<div style="left:1225px;top:677px;width:1px;height:38px;background:#d2d2d2;"></div>
<div class="h" style="left:38px;top:684px;">Variable</div>
<div class="h" style="left:38px;top:697px;">Name</div>
<div class="h" style="left:177px;top:690px;">Description</div>
<div class="h" style="left:396px;top:690px;">Formula</div>
<div class="h" style="left:645px;top:684px;">Default</div>
<div class="h" style="left:645px;top:697px;">Result</div>
<div class="h" style="left:720px;top:690px;">Tag 1</div>
<div class="h" style="left:795px;top:690px;">Tag 2</div>
<div class="h" style="left:870px;top:690px;">Tag 3</div>
<div class="h" style="left:945px;top:684px;">User</div>
<div class="h" style="left:945px;top:697px;">Defined 1</div>
<div class="h" style="left:1040px;top:684px;">User</div>
<div class="h" style="left:1040px;top:697px;">Defined 2</div>
<div class="h" style="left:1135px;top:684px;">User</div>
<div class="h" style="left:1135px;top:697px;">Defined 3</div>
<svg style="left:127.8px;top:691.7px" width="13" height="11" viewBox="0 0 13 11"><rect x="0" y="0" width="3" height="1.1" fill="#9a9a9a"/><rect x="0" y="2.8" width="6" height="1.3" fill="#a2a2a2"/><rect x="0" y="5.4" width="9" height="1.7" fill="#b0b0b0"/><rect x="0" y="8" width="12" height="2" fill="#bebebe"/></svg>
<div style="left:7px;top:715px;width:1365px;height:59px;overflow:hidden;">
<div style="left:26px;top:0px;width:1192px;height:20px;background:#323232;"></div>
<div style="left:25px;top:20px;width:1193px;height:1px;background:#d2d2d2;"></div>
<div style="left:633px;top:21px;width:74px;height:20px;background:#f4f4f4;"></div>
<div style="left:25px;top:41px;width:1193px;height:1px;background:#d2d2d2;"></div>
<div style="left:633px;top:42px;width:74px;height:20px;background:#f4f4f4;"></div>
<div style="left:25px;top:62px;width:1193px;height:1px;background:#d2d2d2;"></div>
<div style="left:25px;top:0px;width:1px;height:59px;background:#d2d2d2;"></div>
<div style="left:163px;top:0px;width:2px;height:59px;background:#d2d2d2;"></div>
<div style="left:383px;top:0px;width:1px;height:59px;background:#d2d2d2;"></div>
<div style="left:632px;top:0px;width:1px;height:59px;background:#d2d2d2;"></div>
<div style="left:707px;top:0px;width:1px;height:59px;background:#d2d2d2;"></div>
<div style="left:782px;top:0px;width:1px;height:59px;background:#d2d2d2;"></div>
<div style="left:857px;top:0px;width:1px;height:59px;background:#d2d2d2;"></div>
<div style="left:932px;top:0px;width:1px;height:59px;background:#d2d2d2;"></div>
<div style="left:1027px;top:0px;width:1px;height:59px;background:#d2d2d2;"></div>
<div style="left:1122px;top:0px;width:1px;height:59px;background:#d2d2d2;"></div>
<div style="left:1218px;top:0px;width:1px;height:59px;background:#d2d2d2;"></div>
<div style="left:633px;top:0px;width:75px;height:21px;background:#f5f5f5;border:1px dotted #111;"></div>
<div class="t" style="left:31.6px;top:4px;letter-spacing:-0.785px;color:#fff;">FTG_AREA</div>
<div class="t" style="left:170.6px;top:4px;letter-spacing:0.023px;color:#fff;">Form/Strip Area of Footing (sqft)</div>
<div class="t" style="left:390.3px;top:4px;letter-spacing:-0.263px;color:#fff;">[LENGTH] * [FTG_THICK_FT] * 2</div>
<div class="t" style="left:639px;top:4px;">161.17</div>
<div class="t" style="left:713px;top:4px;color:#fff;">Footing</div>
<div class="t" style="left:31.6px;top:25px;letter-spacing:-0.648px;">FTG_THICK_FT</div>
<div class="t" style="left:170.6px;top:25px;letter-spacing:-0.076px;">Footing Thickness (ft)</div>
<div class="t" style="left:390.3px;top:25px;letter-spacing:-0.234px;">[FTG_THICK] / 12</div>
<div class="t" style="left:639px;top:25px;">0.81</div>
<div class="t" style="left:713px;top:25px;">Footing</div>
<div class="t" style="left:31.6px;top:46px;letter-spacing:-0.918px;">FTG_VOL</div>
<div class="t" style="left:170.6px;top:46px;letter-spacing:-0.169px;">Volume of Footing Concrete (CY)</div>
<div class="t" style="left:390.3px;top:46px;letter-spacing:-0.190px;">[LENGTH] * [FTG_WIDTH] * [FTG_THICK_FT] /...</div>
<div class="t" style="left:639px;top:46px;">9.94</div>
<div class="t" style="left:713px;top:46px;">Footing</div>
</div>
<svg style="left:14px;top:721px" width="11" height="9" viewBox="0 0 11 9"><path d="M1 4.5H9.8M6.3 1.2L9.8 4.5L6.3 7.8" stroke="#444" stroke-width="0.95" fill="none"/></svg>
<div style="left:1355px;top:715px;width:17px;height:59px;background:#fafafa;"></div>
<div style="left:1355px;top:732px;width:17px;height:17px;background:#e2e2e2;"></div>
<svg style="left:1360px;top:720px" width="7" height="5" viewBox="0 0 7 5"><path d="M0 5H7L3.5 0Z" fill="#5a5a5a"/></svg>
<svg style="left:1360px;top:763px" width="7" height="5" viewBox="0 0 7 5"><path d="M0 0H7L3.5 5Z" fill="#5a5a5a"/></svg>
<div style="left:7px;top:774px;width:1365px;height:1px;background:#d2d2d2;"></div>
<div class="t" style="right:1756px;top:785px;">13</div>
<div style="left:168px;top:780px;width:1px;height:22px;background:#d2d2d2;"></div>
<div style="left:1380px;top:67px;width:533px;height:34px;background:#fafafa;border:1px solid #ababab;border-bottom:2px solid #a3a3a3;"></div>
<div class="b" style="left:1388px;top:77px;letter-spacing:-0.024px;">Notes</div>
<svg style="left:1887.5px;top:79.7px" width="9" height="9" viewBox="0 0 9 9"><path d="M0.4 0.4L8.4 8.4M8.4 0.4L0.4 8.4" stroke="#444" stroke-width="1.25"/></svg>
<div style="left:1379px;top:101px;width:535px;height:678px;background:#fff;border:1px solid #a8a8a8;border-top:none;"></div>
<div style="left:1896px;top:101px;width:17px;height:677px;background:#fbfbfb;"></div>
<div style="left:1384px;top:105px;width:158px;height:14px;background:#b0c5e6;"></div>
<div class="t" style="left:1384.4px;top:105px;font-size:9.5px;color:#24375e;letter-spacing:0.17px;">Standard Retaining Wall Assembly</div>
<div style="left:1384px;top:119px;width:6px;height:283px;background:#b0c5e6;"></div>
<svg style="left:1384px;top:131px" width="265" height="223" viewBox="0 0 265 223"><rect width="265" height="223" fill="#b0c5e6"/><polygon points="15,72 77.6,55.5 250.7,184.1 188.1,200.6" fill="#a7bfe5" stroke="#5e7397" stroke-width="0.4"/><polygon points="15,72 188.1,200.6 188.1,217.5 15,89.3" fill="#61769a"/><polygon points="188.1,200.6 250.7,184.1 250.7,201.1 188.1,217.5" fill="#93a7cd" stroke="#5e7397" stroke-width="0.4"/><polygon points="38.2,19.5 57,14 230.4,142.2 211.6,146.5" fill="#a7bfe5" stroke="#5e7397" stroke-width="0.4"/><polygon points="38.2,19.5 211.6,146.5 211.6,194.3 38.2,66.1" fill="#61769a"/><polygon points="211.6,146.5 230.4,142.2 230.4,189.3 211.6,194.3" fill="#93a7cd" stroke="#5e7397" stroke-width="0.4"/><path d="M67.5,9.8 L237.6,135.3" stroke="#6a7ea3" stroke-width="0.6" fill="none"/><polygon points="65.7,8.5 71.6,9.6 68.6,13.6" fill="#6a7ea3"/><polygon points="239.4,136.6 233.5,135.5 236.5,131.5" fill="#6a7ea3"/><text x="164" y="72.3" font-size="8" fill="#3e5076" text-anchor="middle" transform="rotate(36.4 164 72.3)" dy="2.8" textLength="31" lengthAdjust="spacingAndGlyphs">LENGTH</text></svg>
<svg style="left:1384px;top:402px" width="279" height="247" viewBox="0 0 279 247"><rect width="279" height="247" fill="#b0c5e6"/><rect x="86.2" y="32.2" width="61.1" height="142" fill="#91a5c9" stroke="#7f93b8" stroke-width="0.5"/><rect x="18.4" y="174.2" width="197.1" height="51.4" fill="#91a5c9" stroke="#7386ad" stroke-width="0.6"/><text x="121.8" y="17.9" font-size="8" fill="#3e5076" text-anchor="middle" textLength="55" lengthAdjust="spacingAndGlyphs">WALL_WIDTH</text><path d="M89,25.5H143.5" stroke="#6f83a8" stroke-width="0.7"/><polygon points="86.8,25.5 92.5,22.7 92.5,28.3" fill="#6f83a8"/><polygon points="145.8,25.5 140.1,22.7 140.1,28.3" fill="#6f83a8"/><path d="M158.5,36V169" stroke="#6f83a8" stroke-width="0.7"/><polygon points="158.5,33 155.7,38.8 161.3,38.8" fill="#6f83a8"/><polygon points="158.5,172 155.7,166.2 161.3,166.2" fill="#6f83a8"/><text x="160.8" y="102.9" font-size="8" fill="#3e5076" textLength="57" lengthAdjust="spacingAndGlyphs">WALL_HEIGHT</text><path d="M222.2,176V222" stroke="#6f83a8" stroke-width="0.7"/><polygon points="222.2,173.2 219.4,179 225,179" fill="#6f83a8"/><polygon points="222.2,225.2 219.4,219.4 225,219.4" fill="#6f83a8"/><text x="224.6" y="194.3" font-size="8" fill="#3e5076" textLength="43.5" lengthAdjust="spacingAndGlyphs">FTG_THICK</text><path d="M22,233.1H213" stroke="#6f83a8" stroke-width="0.7"/><polygon points="19.5,233.1 25.3,230.3 25.3,235.9" fill="#6f83a8"/><polygon points="215.1,233.1 209.3,230.3 209.3,235.9" fill="#6f83a8"/><text x="134.2" y="240.8" font-size="8" fill="#3e5076" text-anchor="middle" textLength="48" lengthAdjust="spacingAndGlyphs">FTG_WIDTH</text></svg>
<svg style="left:1901px;top:106px" width="7" height="5" viewBox="0 0 7 5"><path d="M0 5H7L3.5 0Z" fill="#c4c4c4"/></svg>
<svg style="left:1900px;top:767px" width="7" height="5" viewBox="0 0 7 5"><path d="M0 0H7L3.5 5Z" fill="#c4c4c4"/></svg>
<div style="left:1379px;top:778px;width:45px;height:3px;background:#3a3a3a;"></div>
<div class="t" style="left:1387px;top:788px;">Notes</div>
<div class="t" style="left:1432px;top:788px;">Setup</div>
<div class="t" style="left:1478px;top:788px;">Tables</div>
<div style="left:1490px;top:818px;width:78px;height:22px;background:#fdfdfd;border:2px solid #0a68d0;"></div>
<div class="t" style="left:1490px;top:822px;width:78px;text-align:center;">OK</div>
<div style="left:1576px;top:818px;width:78px;height:22px;background:#fdfdfd;border:1px solid #b0b0b0;box-shadow:inset 0 0 0 1px #e2e2e2;"></div>
<div class="t" style="left:1576px;top:822px;width:78px;text-align:center;">Cancel</div>
<div style="left:1662px;top:818px;width:70px;height:22px;background:#fdfdfd;border:1px solid #b0b0b0;box-shadow:inset 0 0 0 1px #e2e2e2;"></div>
<div class="t" style="left:1662px;top:822px;width:70px;text-align:center;">New...</div>
<div style="left:1740px;top:818px;width:78px;height:22px;background:#fcfcfc;border:2px solid #c6c6c6;box-shadow:inset 0 0 0 1px #dedede;"></div>
<div class="t" style="left:1740px;top:822px;width:78px;text-align:center;">&lt; Prev</div>
<div style="left:1826px;top:818px;width:78px;height:22px;background:#fcfcfc;border:2px solid #c6c6c6;box-shadow:inset 0 0 0 1px #dedede;"></div>
<div class="t" style="left:1826px;top:822px;width:78px;text-align:center;">Next &gt;</div>
</body></html>
